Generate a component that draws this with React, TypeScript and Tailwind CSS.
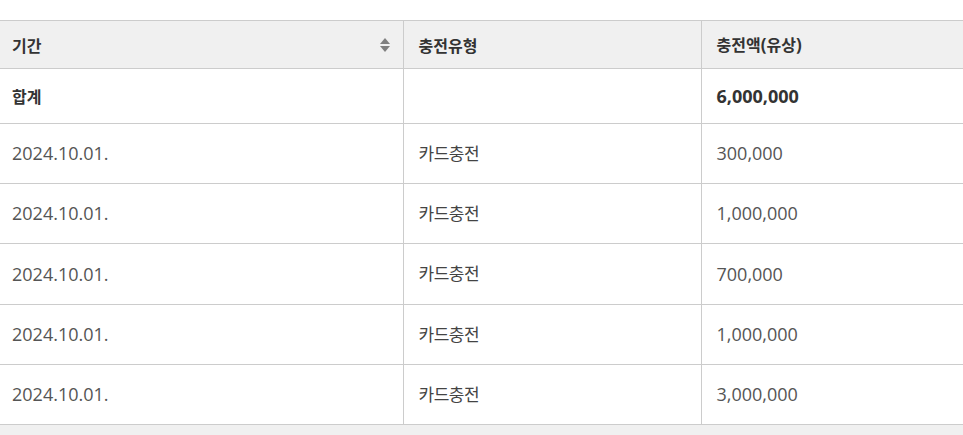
import React from "react";

const rows = [
  ["2024.10.01.", "카드충전", "300,000", "h-[60px]"],
  ["2024.10.01.", "카드충전", "1,000,000", "h-[60px]"],
  ["2024.10.01.", "카드충전", "700,000", "h-[61px]"],
  ["2024.10.01.", "카드충전", "1,000,000", "h-[60px]"],
  ["2024.10.01.", "카드충전", "3,000,000", "h-[60px]"],
];

const num = { fontFamily: '"Open Sans", "Noto Sans CJK KR", sans-serif' };
const kr = { fontFamily: '"Noto Sans CJK KR", "Noto Sans", sans-serif' };

export default function App() {
  return (
    <div className="w-[963px] h-[435px] bg-[#f0f0f0] overflow-hidden" style={kr}>
      <div className="h-[20px] bg-white" />
      <table className="w-full border-collapse bg-white text-[16px] table-fixed">
        <colgroup>
          <col className="w-[403px]" />
          <col className="w-[298px]" />
          <col />
        </colgroup>
        <thead>
          <tr className="h-[48px] bg-[#f0f0f0] text-[#333] font-bold">
            <th className="border-t border-b border-r border-[#cccccc] pl-3 pr-3 text-left font-bold">
              <div className="flex items-center justify-between">
                <span>기간</span>
                <svg width="10" height="14" viewBox="0 0 10 14" className="mr-[1px]">
                  <path d="M5 0 L10 6 L0 6 Z" fill="#808080" />
                  <path d="M0 8 L10 8 L5 14 Z" fill="#808080" />
                </svg>
              </div>
            </th>
            <th className="border-t border-b border-r border-[#cccccc] pl-[15px] text-left font-bold">충전유형</th>
            <th className="border-t border-b border-[#cccccc] pl-[15px] text-left font-bold">
              충전액<span style={num} className="text-[17px]">(</span>유상<span style={num} className="text-[17px]">)</span>
            </th>
          </tr>
        </thead>
        <tbody>
          <tr className="h-[55px] text-[#333] font-bold">
            <td className="border-b border-r border-[#cccccc] pl-3">합계</td>
            <td className="border-b border-r border-[#cccccc] pl-[15px]"></td>
            <td className="border-b border-[#cccccc] pl-[15px] text-[18px]" style={num}>6,000,000</td>
          </tr>
          {rows.map((r, i) => (
            <tr key={i} className={`${r[3]} text-[#555]`}>
              <td className="border-b border-r border-[#cccccc] pl-3 text-[18px]" style={num}>{r[0]}</td>
              <td className="border-b border-r border-[#cccccc] pl-[15px] pb-[2px] text-[17px] tracking-[-0.5px] text-[#444]">{r[1]}</td>
              <td className="border-b border-[#cccccc] pl-[15px] text-[18px]" style={num}>{r[2]}</td>
            </tr>
          ))}
        </tbody>
      </table>
    </div>
  );
}
